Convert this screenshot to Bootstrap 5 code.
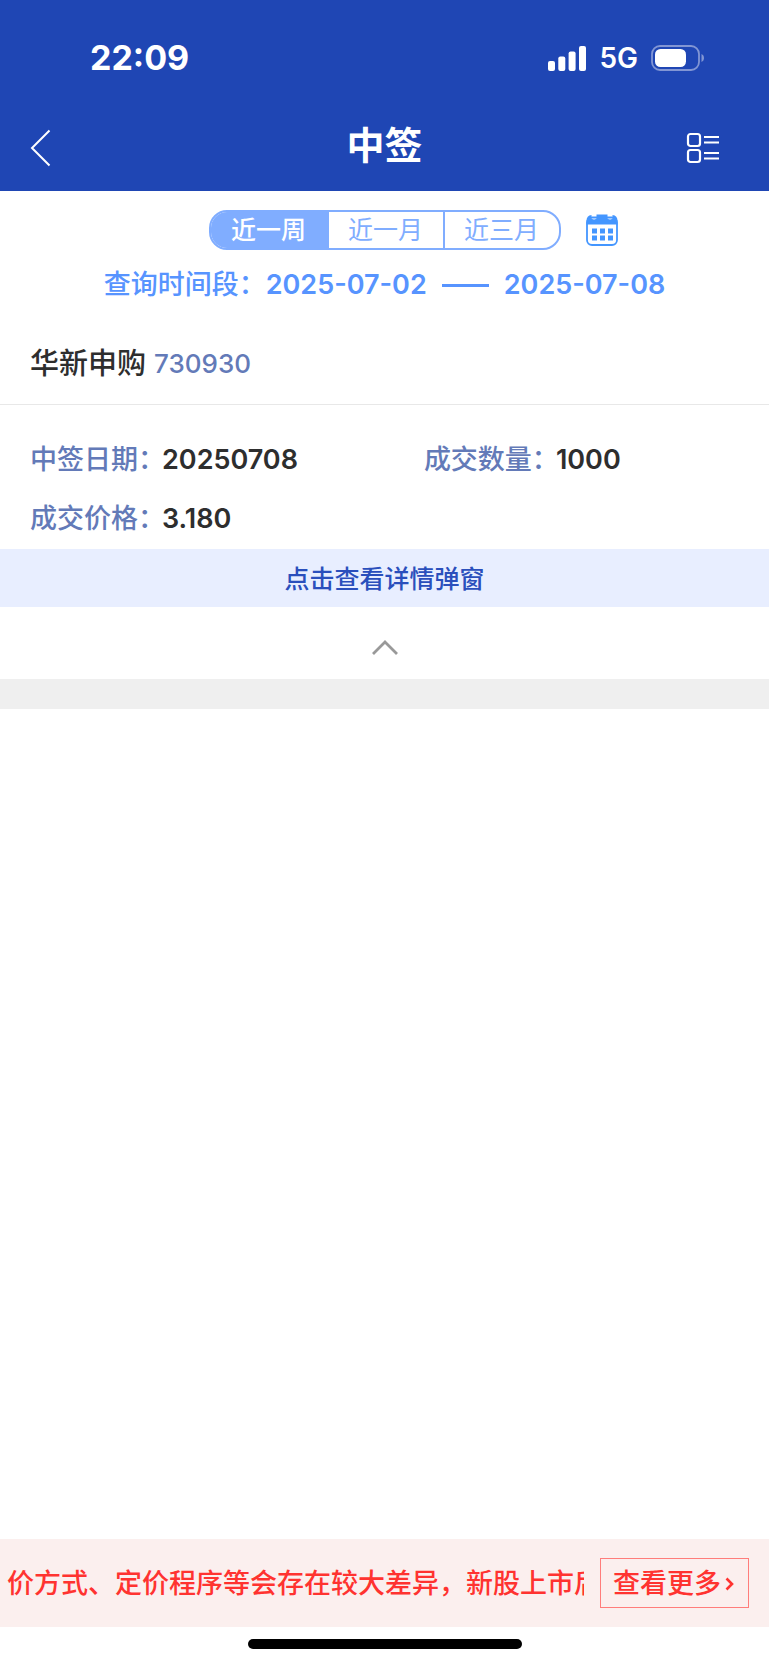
<!DOCTYPE html>
<html lang="zh-CN">
<head>
<meta charset="utf-8">
<meta name="viewport" content="width=device-width, initial-scale=1">
<title>中签</title>
<link href="https://cdn.jsdelivr.net/npm/bootstrap@5.3.0/dist/css/bootstrap.min.css" rel="stylesheet">
<style>
  body { font-family: Inter, "Noto Sans CJK SC", sans-serif; font-size: 27px; line-height: 40px; font-weight: 500; color: #2e2e2e; background: #fff; }
  svg { display: block; }
  .app-header { background: #1f46b4; color: #fff; }
  .status-bar { padding: 36px 64px 23px 90px; line-height: 44px; }
  .status-icons { gap: 13px; }
  .clock { font-size: 34px; font-weight: 700; }
  .network { font-size: 28px; font-weight: 600; }
  .title-bar { padding: 0 28px; height: 88px; }
  .page-title { font-size: 38px; line-height: 56px; font-weight: 700; padding-bottom: 4px; }
  .menu-btn { margin-right: 20px; }
  .three-cols { display: grid; grid-template-columns: 1fr auto 1fr; align-items: center; }
  .range-row { padding-top: 19px; }
  .range-tabs { border: 2px solid #80adff; border-radius: 18px; overflow: hidden; }
  .range-tabs .btn { width: 116px; height: 36px; padding: 0; border: 0; border-radius: 0; font-size: 25px; line-height: 36px; color: #80adff; }
  .range-tabs .btn + .btn { border-left: 2px solid #80adff; }
  .range-tabs .btn.active { background: #80adff; color: #fff; font-weight: 500; }
  .calendar-btn { margin-left: 25px; }
  .query-row { color: #5794ff; margin-top: 15px; gap: 15px; }
  .query-date { font-weight: 600; }
  .dash { width: 47px; height: 3px; background: #5794ff; }
  .stock-head { margin-top: 39px; padding: 0 30px 20px; border-bottom: 1px solid #e8e8e8; gap: 8px; }
  .stock-name { font-size: 29px; line-height: 40px; font-weight: 500; }
  .tint { color: #637ab8; }
  .stock-code { font-size: 26px; }
  .fields { padding: 35px 30px 10px; display: grid; grid-template-columns: 5fr 4fr; row-gap: 19px; }
  .fields dt { font-weight: 500; }
  .fields dd { font-weight: 600; margin-left: -3px; }
  .detail-btn { height: 58px; padding: 2px 0 0; border: 0; background: #e8eeff; color: #2a4fbc; font-size: 25px; line-height: 56px; font-weight: 500; }
  .fold-btn { height: 72px; padding: 8px 0 0; border: 0; background: none; }
  .band { height: 30px; background: #efefef; }
  .notice { background: #fbefee; color: #ff3330; padding: 19px 20px 19px 7px; gap: 16px; }
  .notice-text { overflow: hidden; white-space: nowrap; min-width: 0; padding-top: 2px; }
  .more-link { border: 1px solid #ff7d7b; padding: 5px 14px 3px 12px; color: #ff3330; text-decoration: none; white-space: nowrap; gap: 4px; }
  .home-area { height: 38px; padding-top: 12px; }
  .home-bar { width: 274px; height: 10px; border-radius: 5px; background: #000; }
</style>
</head>
<body>
<div class="d-flex flex-column min-vh-100">
  <header class="app-header">
    <div class="status-bar d-flex justify-content-between align-items-center">
      <span class="clock">22:09</span>
      <div class="status-icons d-flex align-items-center">
        <svg width="38" height="25" viewBox="0 0 38 25" fill="#fff" aria-hidden="true"><rect x="0" y="15" width="7" height="10" rx="2"/><rect x="10.300" y="10.500" width="7" height="14.500" rx="2"/><rect x="20.600" y="5.500" width="7" height="19.500" rx="2"/><rect x="31" y="0" width="7" height="25" rx="2"/></svg>
        <span class="network">5G</span>
        <svg class="ms-n1" width="54" height="26" viewBox="0 0 54 26" aria-hidden="true"><rect x="1" y="1" width="47" height="24" rx="8" fill="none" stroke="#8296d4" stroke-width="1.800"/><rect x="4" y="4" width="31" height="18" rx="5.500" fill="#fff"/><path d="M50.500 9c3.300 1.200 3.300 6.800 0 8z" fill="#8296d4"/></svg>
      </div>
    </div>
    <div class="title-bar three-cols">
      <button class="btn p-0 border-0 me-auto" type="button" aria-label="返回"><svg width="24" height="40" viewBox="0 0 24 40" fill="none" stroke="#fff" stroke-width="2"><path d="M21.500 3.500L4 21 21.500 38.500"/></svg></button>
      <h1 class="page-title m-0">中签</h1>
      <button class="btn p-0 border-0 ms-auto menu-btn" type="button" aria-label="菜单"><svg width="36" height="34" viewBox="0 0 36 34" fill="none" stroke="#fff" stroke-width="2.200"><rect x="3" y="4" width="12" height="12" rx="2.500"/><rect x="3" y="20" width="12" height="12" rx="2.500"/><path d="M19 7h15M19 12.500h15M19 23h15M19 28.500h15"/></svg></button>
    </div>
  </header>

  <main class="flex-grow-1">
    <div class="range-row three-cols">
      <span></span>
      <div class="range-tabs d-flex" role="group" aria-label="时间范围">
        <button class="btn active" type="button">近一周</button>
        <button class="btn" type="button">近一月</button>
        <button class="btn" type="button">近三月</button>
      </div>
      <button class="btn p-0 border-0 calendar-btn me-auto" type="button" aria-label="选择日期"><svg width="32" height="32" viewBox="0 0 32 32"><rect x="1" y="3.500" width="30" height="27.500" rx="5" fill="#fff" stroke="#4496ff" stroke-width="1.800"/><path d="M0.500 10.500V7Q.5 1.500 5.500 1V4.500q2.600 2 5 0V.5h11V4.500q2.600 2 5 0V1q5 .5 5 6v3.500z" fill="#4496ff"/><path d="M6 14.500h5v5H6zM14 14.500h5v5h-5zM22 14.500h5v5h-5zM6 21.500h5v5H6zM14 21.500h5v5h-5zM22 21.500h5v5h-5z" fill="#4496ff"/></svg></button>
    </div>
    <div class="query-row d-flex justify-content-center align-items-center">
      <span>查询时间段：<span class="query-date">2025-07-02</span></span><span class="dash"></span><span class="query-date">2025-07-08</span>
    </div>

    <section>
      <div class="stock-head d-flex align-items-center">
        <h2 class="stock-name m-0">华新申购</h2><span class="stock-code tint">730930</span>
      </div>
      <dl class="fields m-0">
        <div class="d-flex"><dt class="tint">中签日期：</dt><dd class="mb-0">20250708</dd></div>
        <div class="d-flex"><dt class="tint">成交数量：</dt><dd class="mb-0">1000</dd></div>
        <div class="d-flex"><dt class="tint">成交价格：</dt><dd class="mb-0">3.180</dd></div>
      </dl>
      <button class="detail-btn d-block w-100" type="button">点击查看详情弹窗</button>
      <button class="fold-btn w-100 d-flex justify-content-center align-items-center" type="button" aria-label="收起"><svg width="28" height="18" viewBox="0 0 28 18" fill="none" stroke="#999" stroke-width="2.800"><path d="M2 16L14 4l12 12"/></svg></button>
      <div class="band"></div>
    </section>
  </main>

  <footer>
    <div class="notice d-flex align-items-center">
      <div class="notice-text flex-grow-1">价方式、定价程序等会存在较大差异，新股上市后</div>
      <a class="more-link d-flex align-items-center flex-shrink-0" href="#">查看更多<svg width="9" height="14" viewBox="0 0 9 14" fill="none" stroke="#ff3330" stroke-width="2.600"><path d="M1.500 1.500L7 7l-5.500 5.500"/></svg></a>
    </div>
    <div class="home-area d-flex justify-content-center"><div class="home-bar"></div></div>
  </footer>
</div>
<script src="https://cdn.jsdelivr.net/npm/bootstrap@5.3.0/dist/js/bootstrap.bundle.min.js"></script>
</body>
</html>
